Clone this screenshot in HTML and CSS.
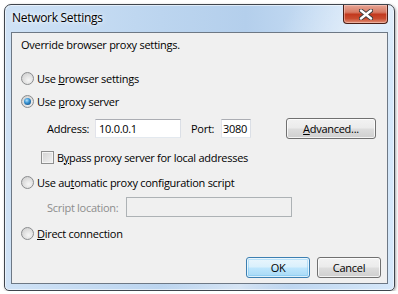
FILE: index.html
```html
<!DOCTYPE html>
<html lang="en">
<head>
    <meta charset="UTF-8">
    <title>Network Settings</title>
    <link rel="stylesheet" href="styles.css">
</head>
<body>
    <!-- Dialog window -->
    <div class="window">
        <div class="titlebar">
            <span class="title">Network Settings</span>
            <button class="close" aria-label="Close">
                <svg width="14" height="11" viewBox="0 0 14 11">
                    <path d="M2 1.5 L12 9.5 M12 1.5 L2 9.5" stroke="#3b3b3b" stroke-width="4.2" stroke-linecap="round"/>
                    <path d="M2 1.5 L12 9.5 M12 1.5 L2 9.5" stroke="#ffffff" stroke-width="2.4" stroke-linecap="round"/>
                </svg>
            </button>
        </div>

        <div class="client">
            <p class="intro">Override browser proxy settings.</p>

            <div class="option"><span class="radio"></span><span>Use <u>b</u>rowser settings</span></div>
            <div class="option"><span class="radio checked"></span><span>Use <u>p</u>roxy server</span></div>

            <div class="field-row address-row">
                <span class="field-label address-label">Address:</span>
                <span class="textbox address">10.0.0.1</span>
                <span class="field-label port-label">Port:</span>
                <span class="textbox port">3080<span class="caret"></span></span>
                <button class="button advanced"><u>A</u>dvanced...</button>
            </div>

            <div class="option bypass"><span class="checkbox"></span><span>B<u>y</u>pass proxy server for local addresses</span></div>

            <div class="option auto"><span class="radio"></span><span>Use au<u>t</u>omatic proxy configuration script</span></div>

            <div class="field-row script-row">
                <span class="field-label script-label disabled">Script location:</span>
                <span class="textbox script disabled"></span>
            </div>

            <div class="option direct"><span class="radio"></span><span><u>D</u>irect connection</span></div>

            <div class="footer">
                <button class="button default">OK</button>
                <button class="button">Cancel</button>
            </div>
        </div>
    </div>
</body>
</html>
```

FILE: styles.css
```css
:root {
    --dialog-bg: #f0f0f0;
    --frame-border: #3f454d;
    --client-border: #6d7885;
    --text: #000000;
    --text-disabled: #8d8d8d;
    --font-ui: 'Open Sans', 'Noto Sans', sans-serif;
}

body {
    margin: 0;
    background: #ffffff;
    font-family: var(--font-ui);
    font-size: 11px;
    letter-spacing: -0.28px;
    color: var(--text);
}

.window {
    box-sizing: border-box;
    width: 391px;
    height: 287px;
    margin: 4px 0 0 4px;
    padding: 0 6px 6px;
    border: 1px solid var(--frame-border);
    border-radius: 7px 7px 5px 5px;
    background:
        linear-gradient(115deg, rgba(255, 255, 255, 0) 55%, rgba(255, 255, 255, 0.45) 70%, rgba(255, 255, 255, 0) 80%),
        linear-gradient(to right, #cfe2f6 0%, #bcd5ef 40%, #b4cfec 62%, #d6e8fa 100%);
    box-shadow: inset 0 0 0 1px rgba(255, 255, 255, 0.55), 1px 1px 3px rgba(0, 0, 0, 0.35);
    display: flex;
    flex-direction: column;
}

.titlebar {
    height: 27px;
    display: flex;
    justify-content: space-between;
    align-items: flex-start;
}

.title {
    margin: 5px 0 0 1px;
    font-size: 12px;
    line-height: 16px;
    letter-spacing: -0.3px;
    text-shadow: 0 0 6px rgba(255, 255, 255, 0.95), 0 0 3px rgba(255, 255, 255, 0.9);
}

.close {
    width: 45px;
    height: 19px;
    margin: 0;
    padding: 0;
    border: 1px solid #4a1e16;
    border-top: none;
    border-radius: 0 0 4px 4px;
    background: linear-gradient(to bottom, #e7a595 0%, #d77a63 40%, #c2391e 52%, #c94b2e 75%, #e0917a 100%);
    box-shadow: inset 0 0 0 1px rgba(255, 220, 210, 0.45);
    display: flex;
    align-items: center;
    justify-content: center;
}

.close svg {
    display: block;
}

.client {
    flex: 1;
    border: 1px solid var(--client-border);
    background: var(--dialog-bg);
    padding: 0 6px 5px 9px;
    display: flex;
    flex-direction: column;
}

.intro {
    margin: 0;
    height: 24px;
    line-height: 24px;
}

.option {
    height: 22px;
    display: flex;
    align-items: center;
    white-space: nowrap;
}

.option + .option {
    margin-top: 1px;
}

.intro + .option {
    margin-top: 10px;
}

u {
    text-decoration: underline;
    text-underline-offset: 1px;
}

.radio {
    box-sizing: border-box;
    width: 13px;
    height: 13px;
    margin-right: 3px;
    border: 1px solid #8a8c8e;
    border-radius: 50%;
    background: radial-gradient(circle at 60% 65%, #f6f6f6 0%, #e2e2e2 45%, #c9c9c9 100%);
    display: flex;
    align-items: center;
    justify-content: center;
    flex-shrink: 0;
}

.radio.checked::after {
    content: '';
    width: 7px;
    height: 7px;
    border-radius: 50%;
    background: radial-gradient(circle at 40% 35%, #b6e2fb 0%, #3a95d4 40%, #15558e 80%, #0d3e6b 100%);
}

.checkbox {
    box-sizing: border-box;
    width: 13px;
    height: 13px;
    margin-right: 3px;
    border: 1px solid #8e8f8f;
    background: linear-gradient(135deg, #d2d2d2 0%, #f3f3f3 100%);
    box-shadow: inset 0 0 0 1px #f4f4f4;
    flex-shrink: 0;
}

.field-row {
    height: 22px;
    display: flex;
    align-items: center;
    padding-left: 26px;
    white-space: nowrap;
}

.address-row {
    margin-top: 5px;
}

.address-label {
    width: 48px;
}

.port-label {
    width: 30px;
    margin-left: 10px;
}

.script-label {
    width: 79px;
}

.disabled {
    color: var(--text-disabled);
}

.textbox {
    box-sizing: border-box;
    height: 19px;
    padding: 0 3px;
    border: 1px solid #abadb3;
    border-color: #abadb3 #dbdfe6 #e3e9ef #e2e3ea;
    background: #ffffff;
    line-height: 17px;
    display: flex;
    align-items: center;
}

.textbox.address {
    width: 86px;
}

.textbox.port {
    width: 30px;
    padding-left: 1px;
}

.caret {
    width: 1px;
    height: 13px;
    margin-left: 1px;
    background: #000000;
}

.textbox.script {
    width: 166px;
    height: 20px;
    border: 1px solid #adb2b5;
    background: var(--dialog-bg);
}

.bypass {
    margin-top: 7px;
    padding-left: 20px;
}

.option.auto {
    margin-top: 3px;
}

.script-row {
    margin-top: 3px;
}

.option.direct {
    margin-top: 4px;
}

.button {
    box-sizing: border-box;
    height: 21px;
    padding: 0;
    font-family: var(--font-ui);
    font-size: 11px;
    letter-spacing: -0.28px;
    color: var(--text);
    border: 1px solid #707070;
    border-radius: 3px;
    background: linear-gradient(to bottom, #f2f2f2 0%, #ebebeb 48%, #dddddd 52%, #cfcfcf 100%);
    box-shadow: inset 0 0 0 1px rgba(255, 255, 255, 0.75);
}

.button.advanced {
    width: 90px;
    margin-left: 35px;
}

.footer {
    margin-top: auto;
    display: flex;
    justify-content: flex-end;
    gap: 7px;
}

.footer .button {
    width: 64px;
}

.button.default {
    border-color: #3c7fb1;
    background: linear-gradient(to bottom, #eaf6fd 0%, #d9f0fc 48%, #bee6fd 52%, #a7d9f5 100%);
    box-shadow: inset 0 0 0 1px rgba(255, 255, 255, 0.7), inset 0 0 0 2px rgba(100, 190, 240, 0.35);
}
```
